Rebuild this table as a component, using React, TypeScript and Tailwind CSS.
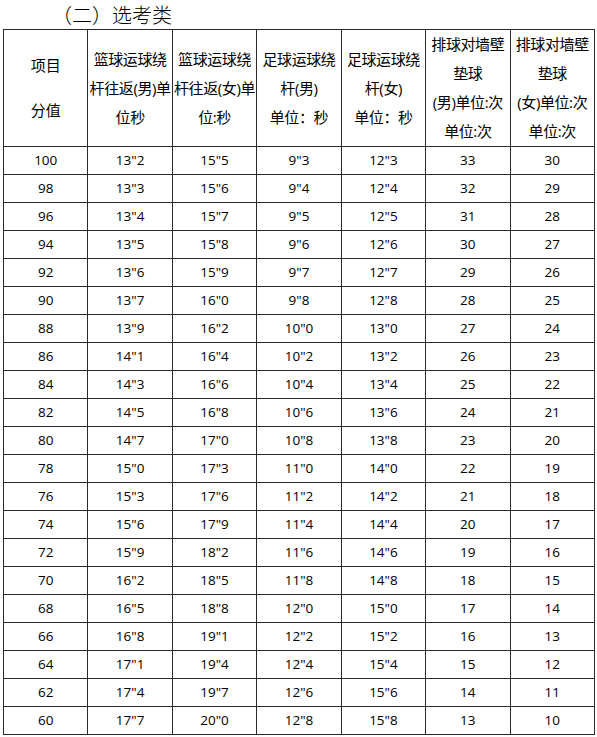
const rows: string[][] = [
  ["100", '13"2', '15"5', '9"3', '12"3', "33", "30"],
  ["98", '13"3', '15"6', '9"4', '12"4', "32", "29"],
  ["96", '13"4', '15"7', '9"5', '12"5', "31", "28"],
  ["94", '13"5', '15"8', '9"6', '12"6', "30", "27"],
  ["92", '13"6', '15"9', '9"7', '12"7', "29", "26"],
  ["90", '13"7', '16"0', '9"8', '12"8', "28", "25"],
  ["88", '13"9', '16"2', '10"0', '13"0', "27", "24"],
  ["86", '14"1', '16"4', '10"2', '13"2', "26", "23"],
  ["84", '14"3', '16"6', '10"4', '13"4', "25", "22"],
  ["82", '14"5', '16"8', '10"6', '13"6', "24", "21"],
  ["80", '14"7', '17"0', '10"8', '13"8', "23", "20"],
  ["78", '15"0', '17"3', '11"0', '14"0', "22", "19"],
  ["76", '15"3', '17"6', '11"2', '14"2', "21", "18"],
  ["74", '15"6', '17"9', '11"4', '14"4', "20", "17"],
  ["72", '15"9', '18"2', '11"6', '14"6', "19", "16"],
  ["70", '16"2', '18"5', '11"8', '14"8', "18", "15"],
  ["68", '16"5', '18"8', '12"0', '15"0', "17", "14"],
  ["66", '16"8', '19"1', '12"2', '15"2', "16", "13"],
  ["64", '17"1', '19"4', '12"4', '15"4', "15", "12"],
  ["62", '17"4', '19"7', '12"6', '15"6', "14", "11"],
  ["60", '17"7', '20"0', '12"8', '15"8', "13", "10"],
];

const headers: string[][] = [
  ["篮球运球绕", "杆往返(男)单", "位秒"],
  ["篮球运球绕", "杆往返(女)单", "位:秒"],
  ["足球运球绕", "杆(男)", "单位：秒"],
  ["足球运球绕", "杆(女)", "单位：秒"],
  ["排球对墙壁", "垫球", "(男)单位:次", "单位:次"],
  ["排球对墙壁", "垫球", "(女)单位:次", "单位:次"],
];

export default function App() {
  return (
    <div className="w-[597px] h-[737px] bg-white text-black font-['Open_Sans','Noto_Sans_CJK_SC',sans-serif]">
      <h1 className="pl-[52px] h-[29px] leading-[29px] text-[20px] font-light font-['Noto_Sans_CJK_SC',serif]">
        （二）选考类
      </h1>
      <table className="ml-[3px] w-[592px] table-fixed border-collapse border border-[#2a2a2a]">
        <thead>
          <tr className="h-[117px]">
            <th className="border border-[#2a2a2a] font-normal text-[15px] leading-[45px]">
              项目
              <br />
              分值
            </th>
            {headers.map((lines, i) => (
              <th
                key={i}
                className="border border-[#2a2a2a] p-0 font-normal text-[15px] leading-[29px] tracking-[-0.4px] whitespace-nowrap"
              >
                {lines.map((l, j) => (
                  <div key={j}>{l}</div>
                ))}
              </th>
            ))}
          </tr>
        </thead>
        <tbody>
          {rows.map((r, i) => (
            <tr key={i} className="h-[28px]">
              {r.map((c, j) => (
                <td key={j} className="border border-[#2a2a2a] p-0 text-center text-[13.5px]">
                  {c}
                </td>
              ))}
            </tr>
          ))}
        </tbody>
      </table>
    </div>
  );
}
